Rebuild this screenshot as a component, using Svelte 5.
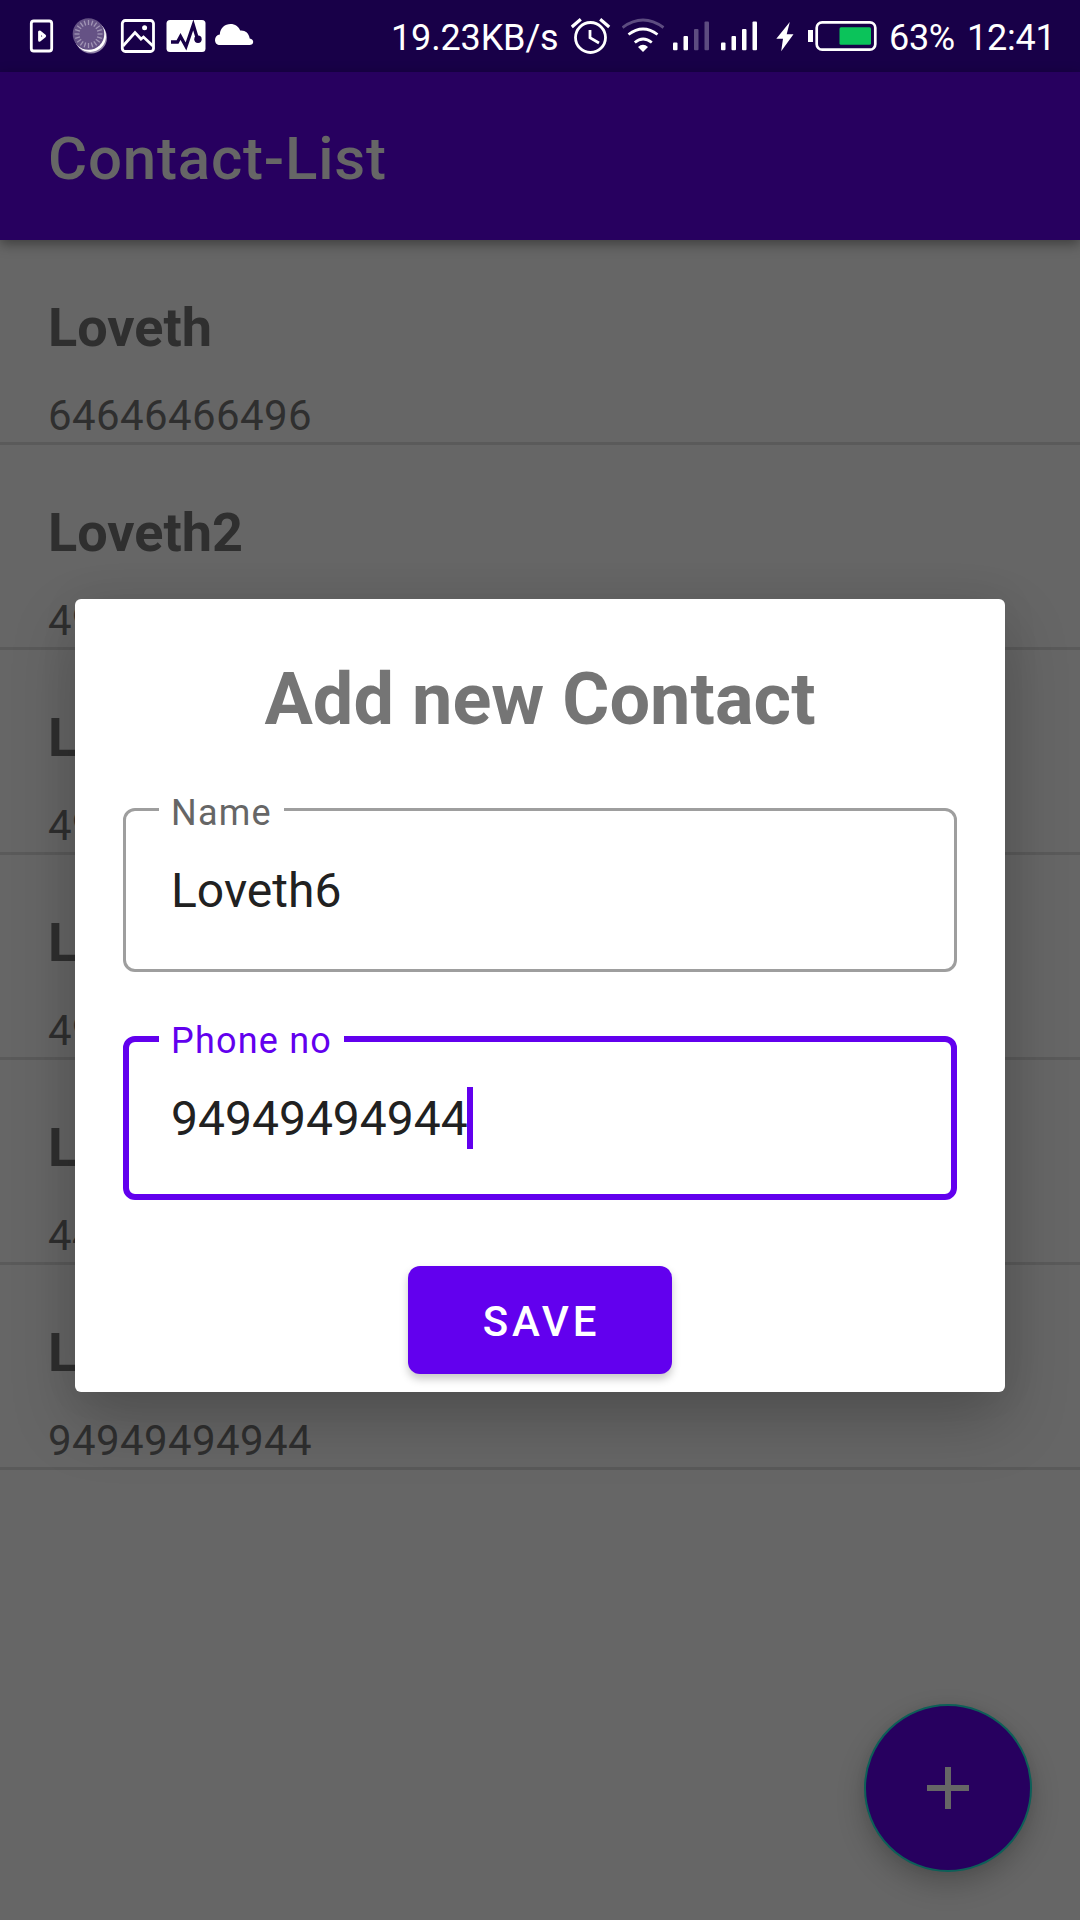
<script>
  const contacts = [
    { name: 'Loveth', phone: '64646466496' },
    { name: 'Loveth2', phone: '49494949494' },
    { name: 'Loveth3', phone: '49494949494' },
    { name: 'Loveth4', phone: '49494949494' },
    { name: 'Loveth5', phone: '44949494949' },
    { name: 'Loveth6', phone: '94949494944' }
  ];
  const rays = Array.from({ length: 20 }, (_, i) => i * 18);
</script>

<div class="screen">
  <header class="status">
    <div class="left">
      <svg width="62" height="72" viewBox="0 0 62 72">
        <rect x="31.3" y="21" width="20.4" height="30" rx="2.5" fill="none" stroke="#fff" stroke-width="2.8" />
        <path d="M39.6 32V40.200L44.600 36Z" fill="none" stroke="#fff" stroke-width="3" stroke-linejoin="round" />
      </svg>
      <svg width="52" height="72" viewBox="62 0 52 72">
        <circle cx="91" cy="37.5" r="16" fill="#9385a9" />
        <circle cx="90.2" cy="36.2" r="15.8" fill="#fff" />
        <circle cx="88.5" cy="34" r="15.8" fill="#655285" />
        {#each rays as angle}
          <path d="M88.5 20V25" stroke="#a195b5" stroke-width="1.3" transform={`rotate(${angle} 88.5 34)`} />
        {/each}
      </svg>
      <svg width="48" height="72" viewBox="114 0 48 72">
        <rect x="122.3" y="20.5" width="31.2" height="31" rx="3" fill="none" stroke="#fff" stroke-width="2.800" />
        <path d="M123 46L135 32.5L141 39L143.5 37L153 46" fill="none" stroke="#fff" stroke-width="2.8" />
        <circle cx="144.6" cy="27.8" r="2.5" fill="#fff" />
      </svg>
      <svg width="48" height="72" viewBox="162 0 48 72">
        <rect x="166.5" y="20" width="39" height="32" rx="3.5" fill="#fff" />
        <path d="M171 42H177.5L180.5 36.5L186 46.5L193.3 25L197.5 39" fill="none" stroke="#180048" stroke-width="3.3" />
        <circle cx="198" cy="39.3" r="3.7" fill="#180048" />
      </svg>
      <svg width="48" height="72" viewBox="210 0 48 72">
        <path d="M220 45C217 45 215 43 215 40C215 37 217 34.8 219.8 34.4C220.2 28 225 24 230.5 24C235.2 24 238.5 26.5 240.2 30.5C245 30 249 33 249.7 38.5C252 39 253.2 40.3 253.2 42C253.2 44 251.5 45 249.5 45Z" fill="#fff" />
      </svg>
    </div>
    <div class="right">
      <span class="speed">19.23KB/s</span>
      <svg width="51" height="72" viewBox="571 0 51 72">
        <circle cx="590.5" cy="37.5" r="15" fill="none" stroke="#fff" stroke-width="2.8" />
        <path d="M590 30V37.8L599 43" fill="none" stroke="#fff" stroke-width="2.8" />
        <path d="M571.8 27L580.8 19.3M609.2 27L600.2 19.3" stroke="#fff" stroke-width="3.2" />
      </svg>
      <svg width="50" height="72" viewBox="622 0 50 72">
        <path d="M622.5 27.5Q643 12.5 663.5 27.5" fill="none" stroke="#5d4c80" stroke-width="2.8" />
        <path d="M628.5 34.5Q643 23.5 657.5 34.5" fill="none" stroke="#fff" stroke-width="2.8" />
        <path d="M634.8 42.5Q643 35.5 651.8 42.5" fill="none" stroke="#fff" stroke-width="2.8" />
        <path d="M638 47Q643 42.5 648 47L643 52Z" fill="#fff" />
      </svg>
      <svg width="48" height="72" viewBox="672 0 48 72">
        <rect x="673" y="42.5" width="4.5" height="7.8" rx="1" fill="#fff" />
        <rect x="683.5" y="36" width="4.5" height="14.3" rx="1" fill="#fff" />
        <rect x="694" y="29" width="4.5" height="21.3" rx="1" fill="#5d4c80" />
        <rect x="704.5" y="21.5" width="4.5" height="28.8" rx="1" fill="#5d4c80" />
      </svg>
      <svg width="56" height="72" viewBox="720 0 56 72">
        <rect x="721" y="42.5" width="4.5" height="7.8" rx="1" fill="#fff" />
        <rect x="731.5" y="36" width="4.5" height="14.3" rx="1" fill="#fff" />
        <rect x="742" y="29" width="4.5" height="21.3" rx="1" fill="#fff" />
        <rect x="752.5" y="21.5" width="4.5" height="28.8" rx="1" fill="#fff" />
      </svg>
      <svg width="32" height="72" viewBox="776 0 32 72">
        <path d="M789.800 22L776.300 38.800H783L781.200 51.200L793.500 34.300H786.700Z" fill="#fff" />
      </svg>
      <svg width="81" height="72" viewBox="808 0 81 72">
        <rect x="808" y="30" width="5" height="12" fill="#fff" />
        <rect x="816.7" y="22.3" width="58.6" height="27.4" rx="5.5" fill="none" stroke="#fff" stroke-width="2.7" />
        <rect x="839.5" y="27.3" width="31.5" height="17.4" rx="1.5" fill="#0bc35a" />
      </svg>
      <span class="percent">63%</span>
      <span class="clock">12:41</span>
    </div>
  </header>

  <div class="appbar"><h1>Contact-List</h1></div>

  <ul class="list">
    {#each contacts as c}
      <li>
        <strong>{c.name}</strong>
        <span>{c.phone}</span>
      </li>
    {/each}
  </ul>

  <button class="fab" aria-label="Add contact">
    <svg width="42" height="42" viewBox="0 0 42 42"><path d="M21 0V42M0 21H42" stroke="#666" stroke-width="6" /></svg>
  </button>

  <div class="overlay">
    <section class="dialog">
      <h2>Add new Contact</h2>
      <div class="field">
        <span class="label">Name</span>
        <span class="value">Loveth6</span>
      </div>
      <div class="field focused">
        <span class="label">Phone no</span>
        <span class="value">94949494944</span><i class="caret"></i>
      </div>
      <button class="save">SAVE</button>
    </section>
  </div>
</div>

<style>
  :global(body) { margin: 0; background: #666; }
  .screen {
    position: relative;
    width: 1080px;
    height: 1920px;
    overflow: hidden;
    background: #666;
    font-family: Roboto, sans-serif;
  }
  svg { display: block; }
  h1, h2, ul { margin: 0; padding: 0; }
  button { border: 0; padding: 0; font-family: inherit; }

  .status {
    display: flex;
    justify-content: space-between;
    height: 72px;
    background: #180048;
    color: #fff;
  }
  .left { display: flex; }
  .right {
    display: grid;
    grid-template-columns: 180px 51px 50px 48px 56px 32px 81px 77px 114px;
    font-size: 36px;
    line-height: 76px;
    white-space: nowrap;
  }
  .speed { letter-spacing: -0.15px; }
  .percent { letter-spacing: -0.3px; }
  .clock { padding-left: 1px; letter-spacing: -0.2px; }

  .appbar {
    position: relative;
    height: 168px;
    box-sizing: border-box;
    padding: 52px 48px 0;
    background: #27005f;
    box-shadow: 0 4px 12px rgba(0, 0, 0, 0.4);
  }
  h1 {
    font-size: 60px;
    line-height: 70px;
    font-weight: 500;
    letter-spacing: 0.8px;
    color: #666;
  }

  .list { list-style: none; color: #2f2f2f; }
  li {
    display: flex;
    flex-direction: column;
    gap: 31px;
    height: 205px;
    box-sizing: border-box;
    padding: 56px 48px 0;
    border-bottom: 3px solid #5a5a5a;
  }
  li strong { font-size: 54px; line-height: 64px; font-weight: 700; }
  li span { font-size: 42px; line-height: 50px; letter-spacing: 0.4px; }

  .fab {
    position: absolute;
    right: 48px;
    bottom: 48px;
    display: grid;
    place-items: center;
    width: 168px;
    height: 168px;
    box-sizing: border-box;
    border: 2px solid #0d5f58;
    border-radius: 50%;
    background: #27005f;
    box-shadow: 0 12px 28px rgba(0, 0, 0, 0.22), 0 0 10px rgba(0, 0, 0, 0.06);
  }

  .overlay {
    position: absolute;
    inset: 0;
    display: flex;
    justify-content: center;
    align-items: flex-start;
    padding-top: 599px;
  }
  .dialog {
    display: flex;
    flex-direction: column;
    align-items: center;
    width: 930px;
    height: 792.5px;
    box-sizing: border-box;
    padding: 52px 48px 0;
    border-radius: 6px;
    background: #fff;
    box-shadow: 0 28px 64px rgba(0, 0, 0, 0.22), 0 0 40px rgba(0, 0, 0, 0.06);
  }
  h2 {
    font-size: 72px;
    line-height: 98px;
    font-weight: 700;
    letter-spacing: 0.06px;
    color: #757575;
    margin-bottom: 59px;
    white-space: nowrap;
  }
  .field {
    --stroke: 3px;
    --tint: #9e9e9e;
    position: relative;
    display: flex;
    align-self: stretch;
    height: 164px;
    box-sizing: border-box;
    padding: calc(55px - var(--stroke)) calc(48px - var(--stroke)) 0;
    border: var(--stroke) solid var(--tint);
    border-radius: 12px;
    margin-bottom: 64px;
  }
  .focused { --stroke: 6px; --tint: #6200ee; margin-bottom: 66px; }
  .label {
    position: absolute;
    left: calc(36px - var(--stroke));
    top: calc(-16px - var(--stroke));
    padding: 0 12px;
    background: #fff;
    font-size: 36px;
    line-height: 42px;
    letter-spacing: 1.2px;
    color: #666;
  }
  .focused .label { color: #6200ee; }
  .value { font-size: 48px; line-height: 56px; color: #212121; }
  .caret { width: 6px; height: 62px; margin: -4px 0 0 -1px; background: #6200ee; }
  .save {
    width: 264px;
    height: 108px;
    padding: 2px 0 0 3px;
    border-radius: 12px;
    background: #6200ee;
    color: #fff;
    font-size: 42px;
    font-weight: 500;
    letter-spacing: 3.75px;
    box-shadow: 0 5px 8px rgba(0, 0, 0, 0.22);
  }
</style>
